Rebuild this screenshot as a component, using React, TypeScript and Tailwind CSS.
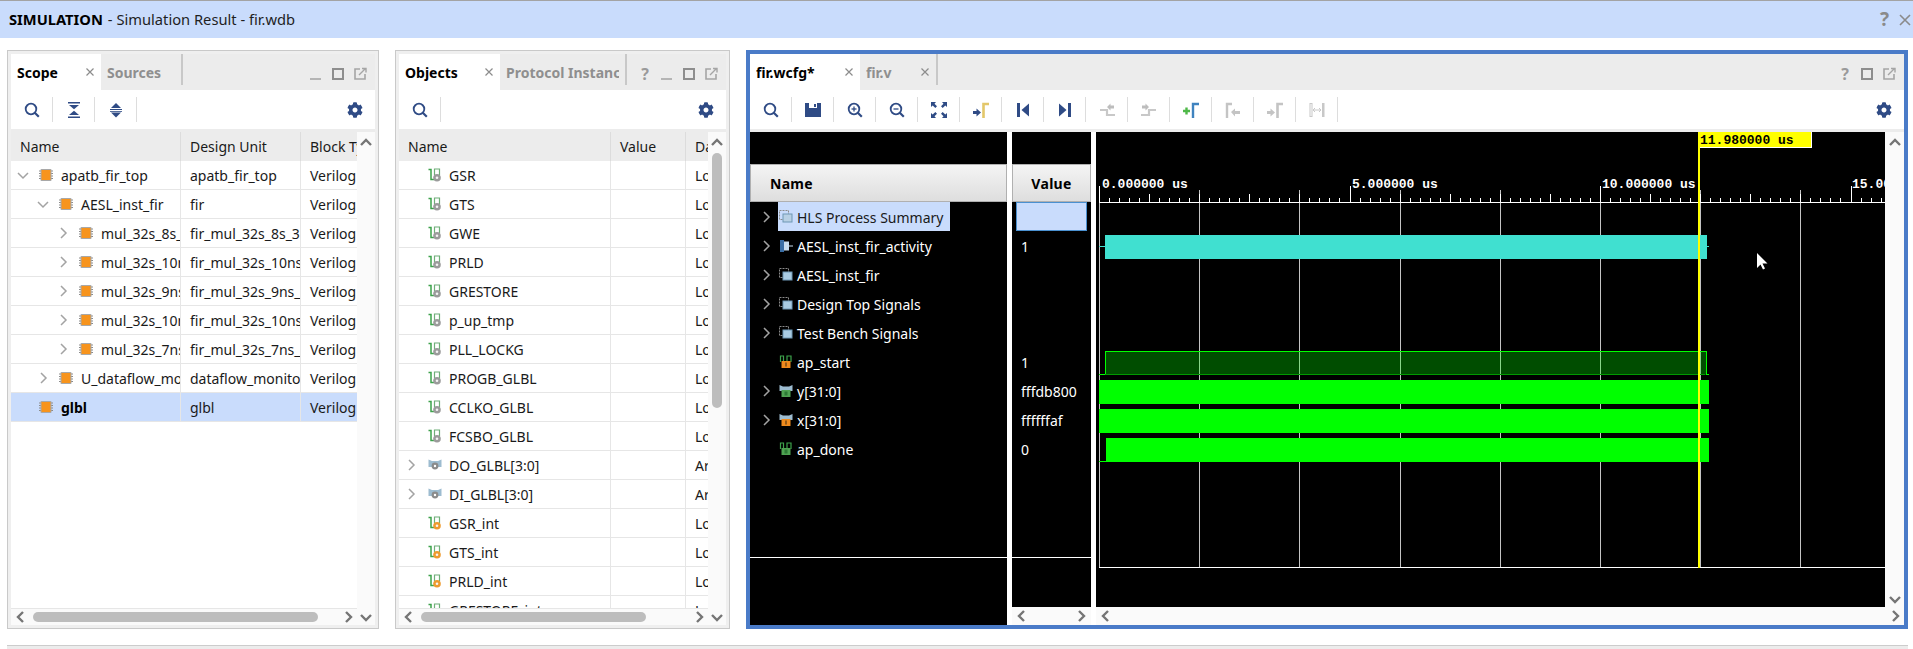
import React from "react";
import { FaCog } from "react-icons/fa";

const NAVY = "#2f4b85";

function Chevron({ dir, tree }: { dir: "up" | "down" | "left" | "right"; tree?: boolean }) {
  const paths = {
    up: "M2 9l5-5 5 5",
    down: "M2 5l5 5 5-5",
    left: "M9 2L4 7l5 5",
    right: "M5 2l5 5-5 5",
  };
  return (
    <svg width="14" height="14" viewBox="0 0 14 14" fill="none">
      <path d={paths[dir]} stroke={tree ? "#a3a3a3" : "#757575"} strokeWidth={tree ? 1.5 : 2.4} />
    </svg>
  );
}

function WindowIcons({ help, noMin }: { help?: boolean; noMin?: boolean }) {
  return (
    <div className="flex items-center gap-[8px] text-[#9a9a9a] pt-[4px]">
      {help && <span className="w-[14px] text-center text-[16px] font-bold leading-none">?</span>}
      {!noMin && (
        <svg width="14" height="14" viewBox="0 0 14 14"><rect x="1" y="11" width="11" height="2" fill="#b5b5b5" /></svg>
      )}
      <svg width="14" height="14" viewBox="0 0 14 14" fill="none"><rect x="2" y="2" width="10" height="10" stroke="#8e8e8e" strokeWidth="2" /></svg>
      <svg width="14" height="14" viewBox="0 0 14 14" fill="none">
        <path d="M7 2H2v10h10V7" stroke="#a5a5a5" strokeWidth="1.6" />
        <path d="M6 8l6-6M9 1.500h4v4" stroke="#a5a5a5" strokeWidth="1.4" />
      </svg>
    </div>
  );
}

function Tab({ label, active, width, closable = true }: { label: string; active?: boolean; width: string; closable?: boolean }) {
  return (
    <div className={`flex items-center pl-[6px] pr-[6px] h-full text-[14px] font-bold ${width} ${active ? "bg-white text-black" : "text-[#8f8f8f]"}`}>
      <span className="flex-1 overflow-hidden whitespace-nowrap">{label}</span>
      {closable && (
        <svg width="10" height="10" viewBox="0 0 10 10" fill="none">
          <path d="M1.500 1.500l7 7M8.500 1.500l-7 7" stroke="#8c8c8c" strokeWidth="1.200" />
        </svg>
      )}
    </div>
  );
}

function TabSep() {
  return <div className="w-[2px] h-[31px] bg-[#c8c8c8] self-start" />;
}

function ToolBtn({ children }: { children: React.ReactNode }) {
  return <div className="w-[42px] h-[25px] flex items-center justify-center border-r border-[#dddddd]">{children}</div>;
}

const SearchIcon = ({ mark }: { mark?: "plus" | "minus" }) => (
  <svg width="16" height="16" viewBox="0 0 16 16" fill="none">
    <circle cx="7" cy="7" r="5.300" stroke={NAVY} strokeWidth="1.800" />
    <path d="M10.800 10.800l4 4" stroke={NAVY} strokeWidth="2.200" />
    {mark && <path d="M4.500 7h5" stroke={NAVY} strokeWidth="1.300" />}
    {mark === "plus" && <path d="M7 4.500v5" stroke={NAVY} strokeWidth="1.300" />}
  </svg>
);

const CollapseIcon = () => (
  <svg width="14" height="16" viewBox="0 0 14 16" fill={NAVY}>
    <rect x="1" y="0" width="12" height="1.500" />
    <path d="M2 3h10L7 7.200z" />
    <path d="M2 13h10L7 8.800z" />
    <rect x="1" y="14.500" width="12" height="1.500" />
  </svg>
);

const ExpandIcon = () => (
  <svg width="14" height="16" viewBox="0 0 14 16" fill={NAVY}>
    <path d="M2 6h10L7 1z" />
    <rect x="1" y="7" width="12" height="1" />
    <rect x="1" y="9" width="12" height="0.800" />
    <path d="M2 10.500h10L7 15.500z" />
  </svg>
);

const SaveIcon = () => (
  <svg width="16" height="16" viewBox="0 0 16 16">
    <path d="M0 1h16v14H0z" fill={NAVY} />
    <rect x="4" y="1" width="8" height="5" fill="#ffffff" />
    <rect x="9" y="2" width="2" height="3" fill={NAVY} />
  </svg>
);

const FitIcon = () => (
  <svg width="16" height="16" viewBox="0 0 16 16" fill={NAVY}>
    <path d="M0 0h5L3.500 1.700 6 4.300 4.300 6 1.700 3.500 0 5z" />
    <path d="M16 0h-5l1.500 1.700L10 4.300 11.700 6l2.600-2.500L16 5z" />
    <path d="M0 16h5l-1.500-1.700L6 11.700 4.300 10l-2.600 2.500L0 11z" />
    <path d="M16 16h-5l1.500-1.700-2.500-2.600 1.700-1.700 2.600 2.500L16 11z" />
  </svg>
);

const MarkerIcon = ({ arrow, bar, left }: { arrow: string; bar: string; left?: boolean }) => (
  <svg width="16" height="16" viewBox="0 0 16 16" fill="none">
    {left ? (
      <>
        <path d="M2 16V2h5" stroke={bar} strokeWidth="2.400" />
        <path d="M6 10l4-3.500V9h5v3h-5v2.500z" fill={arrow} />
      </>
    ) : (
      <>
        <path d="M0 9h3.500V6.500L8 10.500l-4.500 4V12H0z" fill={arrow} />
        <path d="M10.500 16V2H16" stroke={bar} strokeWidth="2.600" />
      </>
    )}
  </svg>
);

const AddMarkerIcon = () => (
  <svg width="16" height="16" viewBox="0 0 16 16" fill="none">
    <path d="M0 9h7M3.500 5.500v7" stroke="#4fb848" strokeWidth="2.400" />
    <path d="M10 16V2h6" stroke="#3f83bf" strokeWidth="2.400" />
  </svg>
);

const PrevIcon = () => (
  <svg width="14" height="16" viewBox="0 0 14 16" fill={NAVY}>
    <rect x="1" y="1" width="3" height="14" />
    <path d="M13 1.500v13L5.500 8z" />
  </svg>
);

const NextIcon = () => (
  <svg width="14" height="16" viewBox="0 0 14 16" fill={NAVY}>
    <rect x="10" y="1" width="3" height="14" />
    <path d="M1 1.500v13L8.500 8z" />
  </svg>
);

const EdgeIcon = ({ flip }: { flip?: boolean }) => (
  <svg width="16" height="14" viewBox="0 0 16 14" fill="none">
    {flip ? (
      <>
        <path d="M0 12h8V7h7" stroke="#c8c8c8" strokeWidth="2.200" />
        <path d="M1 2.500h3.500V0.500L8 4 4.500 7.500v-2H1z" fill="#bdbdbd" />
      </>
    ) : (
      <>
        <path d="M1 7h7v5h8" stroke="#c8c8c8" strokeWidth="2.200" />
        <path d="M15 2.500h-3.500V0.500L8 4l3.500 3.500v-2H15z" fill="#bdbdbd" />
      </>
    )}
  </svg>
);

const SpanIcon = () => (
  <svg width="16" height="14" viewBox="0 0 16 14" fill="none">
    <rect x="1" y="0.500" width="2" height="13" stroke="#c8c8c8" />
    <rect x="13" y="0" width="2.500" height="14" fill="#c8c8c8" />
    <path d="M4 7h8M4 7l2-2M4 7l2 2M12 7l-2-2M12 7l-2 2" stroke="#c8c8c8" />
  </svg>
);

const ChipIcon = () => (
  <svg width="14" height="14" viewBox="0 0 14 14">
    <path d="M0 3h14M0 5.500h14M0 8h14M0 10.500h14" stroke="#8a8a8a" strokeWidth="1" />
    <rect x="1.500" y="1" width="11" height="12" rx="1" fill="#a8a8a8" />
    <rect x="2.500" y="2" width="9" height="10" fill="#f7941d" />
  </svg>
);

const SignalIcon = ({ badge = "#9b9b9b" }: { badge?: string }) => (
  <svg width="14" height="14" viewBox="0 0 14 14" fill="none">
    <path d="M0.500 1.500h2.500v10h3" stroke="#3da24b" strokeWidth="1.500" />
    <path d="M6.500 7V1h5v6" stroke="#6fae78" strokeWidth="1.200" />
    <circle cx="9" cy="9.800" r="3.800" fill={badge} />
    <circle cx="9" cy="9.800" r="1.300" fill="#f4f4f4" />
  </svg>
);

const BusIcon = () => (
  <svg width="14" height="14" viewBox="0 0 14 14">
    <path d="M0.500 1.500L4 3h6l3.500-1.500V9H0.500z" fill="#9dbcd0" />
    <circle cx="7" cy="8" r="3.400" fill="#8b8b8b" />
    <circle cx="7" cy="8" r="1.200" fill="#ffffff" />
  </svg>
);

const GroupIcon = ({ outline }: { outline?: boolean }) => (
  <svg width="14" height="14" viewBox="0 0 14 14" fill="none">
    <rect x="0.500" y="0.500" width="9" height="9" stroke="#8a8a8a" strokeDasharray="2 1" />
    <rect x="4" y="4" width="9" height="8" fill={outline ? "#b8d0e4" : "#a9cbe2"} stroke="#6f97b5" />
  </svg>
);

const ActivityIcon = () => (
  <svg width="14" height="14" viewBox="0 0 14 14">
    <rect x="1" y="1" width="4" height="12" fill="#3a6ea5" />
    <rect x="5" y="2.500" width="5" height="9" fill="#c7dcee" />
    <rect x="10" y="6.500" width="4" height="1" fill="#c7dcee" />
  </svg>
);

const PortIcon = ({ color, mark, bus }: { color: string; mark: string; bus?: boolean }) => (
  <svg width="14" height="14" viewBox="0 0 14 14" fill="none">
    {bus ? (
      <path d="M0.500 1L4 2.500h6L13.500 1v6H0.500z" fill="#9dbcd0" />
    ) : (
      <path d="M1.500 7V1h3v6M8 7V1h4v6" stroke="#3da24b" strokeWidth="1.200" />
    )}
    <rect x="2.500" y="6" width="9" height="7" fill={color} />
    <rect x={mark === "I" ? 6.500 : 5.500} y="7.500" width={mark === "I" ? 1 : 3} height="4" fill={mark === "I" ? "#3a2a10" : "#2d7a35"} />
  </svg>
);

function VScroll({ thumb }: { thumb?: boolean }) {
  return (
    <div className="w-[18px] bg-[#fafafa] flex flex-col items-center">
      <div className="h-[21px] flex items-center justify-center"><Chevron dir="up" /></div>
      {thumb && <div className="w-[10px] h-[255px] rounded-[5px] bg-[#bdbdbd]" />}
      <div className="flex-1" />
      <div className="h-[17px] flex items-center justify-center"><Chevron dir="down" /></div>
    </div>
  );
}

function HScroll({ thumbWidth }: { thumbWidth: string }) {
  return (
    <div className="h-[17px] bg-[#fafafa] border-t border-[#e6e6e6] flex items-center">
      <div className="w-[20px] flex justify-center"><Chevron dir="left" /></div>
      <div className={`ml-[2px] h-[10px] rounded-[5px] bg-[#bdbdbd] ${thumbWidth}`} />
      <div className="flex-1" />
      <div className="w-[18px] flex justify-center"><Chevron dir="right" /></div>
    </div>
  );
}

const indent = ["pl-0", "pl-5", "pl-10"];

const scopeRows = [
  { name: "apatb_fir_top", unit: "apatb_fir_top", level: 0, chev: "down" },
  { name: "AESL_inst_fir", unit: "fir", level: 1, chev: "down" },
  { name: "mul_32s_8s_32_3_1_U1", unit: "fir_mul_32s_8s_32_3_1", level: 2, chev: "right" },
  { name: "mul_32s_10ns_32_3_1_U2", unit: "fir_mul_32s_10ns_32_3_1", level: 2, chev: "right" },
  { name: "mul_32s_9ns_32_3_1_U3", unit: "fir_mul_32s_9ns_32_3_1", level: 2, chev: "right" },
  { name: "mul_32s_10ns_32_3_1_U4", unit: "fir_mul_32s_10ns_32_3_1", level: 2, chev: "right" },
  { name: "mul_32s_7ns_32_3_1_U5", unit: "fir_mul_32s_7ns_32_3_1", level: 2, chev: "right" },
  { name: "U_dataflow_monitor", unit: "dataflow_monitor", level: 1, chev: "right" },
  { name: "glbl", unit: "glbl", level: 0, chev: "", selected: true },
];

const objectRows = [
  { name: "GSR", type: "Logic" },
  { name: "GTS", type: "Logic" },
  { name: "GWE", type: "Logic" },
  { name: "PRLD", type: "Logic" },
  { name: "GRESTORE", type: "Logic" },
  { name: "p_up_tmp", type: "Logic" },
  { name: "PLL_LOCKG", type: "Logic" },
  { name: "PROGB_GLBL", type: "Logic" },
  { name: "CCLKO_GLBL", type: "Logic" },
  { name: "FCSBO_GLBL", type: "Logic" },
  { name: "DO_GLBL[3:0]", type: "Array", bus: true },
  { name: "DI_GLBL[3:0]", type: "Array", bus: true },
  { name: "GSR_int", type: "Logic", reg: true },
  { name: "GTS_int", type: "Logic", reg: true },
  { name: "PRLD_int", type: "Logic", reg: true },
  { name: "GRESTORE_int", type: "Logic", reg: true },
];

const waveRows: { name: string; value: string; chev: boolean; icon: React.ReactNode; selected?: boolean }[] = [
  { name: "HLS Process Summary", value: "", chev: true, icon: <GroupIcon outline />, selected: true },
  { name: "AESL_inst_fir_activity", value: "1", chev: true, icon: <ActivityIcon /> },
  { name: "AESL_inst_fir", value: "", chev: true, icon: <GroupIcon /> },
  { name: "Design Top Signals", value: "", chev: true, icon: <GroupIcon /> },
  { name: "Test Bench Signals", value: "", chev: true, icon: <GroupIcon /> },
  { name: "ap_start", value: "1", chev: false, icon: <PortIcon color="#ee8a1d" mark="I" /> },
  { name: "y[31:0]", value: "fffdb800", chev: true, icon: <PortIcon color="#4fa352" mark="O" bus /> },
  { name: "x[31:0]", value: "ffffffaf", chev: true, icon: <PortIcon color="#ee8a1d" mark="I" bus /> },
  { name: "ap_done", value: "0", chev: false, icon: <PortIcon color="#4fa352" mark="O" /> },
];

function ScopePanel() {
  return (
    <div className="w-[372px] flex flex-col border border-[#c9c9c9] bg-[#efefef] p-[3px]">
      <div className="h-[36px] flex bg-[#ececec]">
        <Tab label="Scope" active width="w-[90px]" />
        <Tab label="Sources" width="w-[80px]" closable={false} />
        <TabSep />
        <div className="flex-1" />
        <div className="self-center pr-[8px]"><WindowIcons /></div>
      </div>
      <div className="h-[39px] bg-white flex items-center">
        <ToolBtn><SearchIcon /></ToolBtn>
        <ToolBtn><CollapseIcon /></ToolBtn>
        <ToolBtn><ExpandIcon /></ToolBtn>
        <div className="ml-auto mr-[12px]"><FaCog size={16} color={NAVY} /></div>
      </div>
      <div className="h-[3px] bg-[#ececec]" />
      <div className="flex-1 flex min-h-0 bg-white">
        <div className="w-[346px] flex flex-col">
          <div className="flex-1 overflow-hidden">
            <div className="h-[29px] flex items-center bg-[#ececec] text-[14px] text-[#1a1a1a]">
              <div className="w-[170px] pl-[9px] h-full flex items-center border-r border-[#dcdcdc]">Name</div>
              <div className="w-[120px] pl-[9px] h-full flex items-center border-r border-[#dcdcdc]">Design Unit</div>
              <div className="w-[56px] pl-[9px] h-full flex items-center overflow-hidden whitespace-nowrap">Block Type</div>
            </div>
            {scopeRows.map((r) => (
              <div key={r.name} className={`h-[29px] flex text-[14px] text-[#1a1a1a] border-b border-[#e6e6e6] ${r.selected ? "bg-[#c9dcfc]" : ""}`}>
                <div className={`w-[170px] flex items-center overflow-hidden whitespace-nowrap border-r border-[#e6e6e6] ${indent[r.level]}`}>
                  <div className="w-6 shrink-0 flex justify-center">
                    {r.chev && <Chevron dir={r.chev as "down" | "right"} tree />}
                  </div>
                  <div className="ml-1 shrink-0 flex"><ChipIcon /></div>
                  <span className={`ml-2 ${r.selected ? "font-bold text-black" : ""}`}>{r.name}</span>
                </div>
                <div className="w-[120px] pl-[9px] flex items-center overflow-hidden whitespace-nowrap border-r border-[#e6e6e6]">{r.unit}</div>
                <div className="w-[56px] pl-[9px] flex items-center overflow-hidden whitespace-nowrap">Verilog Module</div>
              </div>
            ))}
          </div>
          <HScroll thumbWidth="w-[285px]" />
        </div>
        <VScroll />
      </div>
    </div>
  );
}

function ObjectsPanel() {
  return (
    <div className="w-[335px] flex flex-col border border-[#c9c9c9] bg-[#efefef] p-[3px]">
      <div className="h-[36px] flex bg-[#ececec]">
        <Tab label="Objects" active width="w-[101px]" />
        <Tab label="Protocol Instances" width="w-[125px]" closable={false} />
        <TabSep />
        <div className="flex-1" />
        <div className="self-center pr-[8px]"><WindowIcons help /></div>
      </div>
      <div className="h-[39px] bg-white flex items-center">
        <ToolBtn><SearchIcon /></ToolBtn>
        <div className="ml-auto mr-[12px]"><FaCog size={16} color={NAVY} /></div>
      </div>
      <div className="h-[3px] bg-[#ececec]" />
      <div className="flex-1 flex min-h-0 bg-white">
        <div className="w-[309px] flex flex-col">
          <div className="flex-1 overflow-hidden">
            <div className="h-[29px] flex items-center bg-[#ececec] text-[14px] text-[#1a1a1a]">
              <div className="w-[212px] pl-[9px] h-full flex items-center border-r border-[#dcdcdc]">Name</div>
              <div className="w-[75px] pl-[9px] h-full flex items-center border-r border-[#dcdcdc]">Value</div>
              <div className="w-[22px] pl-[9px] h-full flex items-center overflow-hidden whitespace-nowrap">Data Type</div>
            </div>
            {objectRows.map((r) => (
              <div key={r.name} className="h-[29px] flex text-[14px] text-[#1a1a1a] border-b border-[#e6e6e6]">
                <div className="w-[212px] flex items-center overflow-hidden whitespace-nowrap border-r border-[#e6e6e6]">
                  <div className="w-6 shrink-0 flex justify-center">{r.bus && <Chevron dir="right" tree />}</div>
                  <div className="ml-[5px] shrink-0 flex">
                    {r.bus ? <BusIcon /> : <SignalIcon badge={r.reg ? "#ee9a2e" : undefined} />}
                  </div>
                  <span className="ml-[7px]">{r.name}</span>
                </div>
                <div className="w-[75px] border-r border-[#e6e6e6]" />
                <div className="w-[22px] pl-[9px] flex items-center overflow-hidden whitespace-nowrap">{r.type}</div>
              </div>
            ))}
          </div>
          <HScroll thumbWidth="w-[225px]" />
        </div>
        <VScroll thumb />
      </div>
    </div>
  );
}

const ticks = Array.from({ length: 79 }, (_, i) => ({ i, x: Math.round(1099 + i * 10.02) }));

function Waveform() {
  const mono = "font-['Liberation_Mono',monospace] font-bold text-[13px]";
  return (
    <svg width="789" height="475" viewBox="1096 132 789 475" className="block" shapeRendering="crispEdges">
      {ticks.filter((t) => t.i % 10 === 0).map((t) => (
        <rect key={t.i} x={t.x} y={t.i % 50 === 0 ? 186 : 190} width="1" height={t.i % 50 === 0 ? 381 : 377} fill="#c4c4c4" />
      ))}
      {ticks.map((t) => {
        const h = t.i % 25 === 0 ? 16 : t.i % 5 === 0 ? 8 : 4;
        return <rect key={t.i} x={t.x} y={202 - h} width="1" height={h} fill="#ffffff" />;
      })}
      <rect x="1099" y="202" width="786" height="1" fill="#ffffff" />
      <rect x="1099" y="567" width="786" height="1" fill="#ffffff" />

      <text x="1102" y="188" fill="#ffffff" className={mono}>0.000000 us</text>
      <text x="1352" y="188" fill="#ffffff" className={mono}>5.000000 us</text>
      <text x="1602" y="188" fill="#ffffff" className={mono}>10.000000 us</text>
      <text x="1852" y="188" fill="#ffffff" className={mono}>15.000000 us</text>

      <rect x="1099" y="246" width="6" height="1" fill="#40e0d0" />
      <rect x="1105" y="235" width="602" height="24" fill="#40e0d0" />
      <rect x="1707" y="246" width="2" height="1" fill="#40e0d0" />

      <rect x="1105" y="351" width="602" height="24" fill="#00ff00" fillOpacity="0.3" />
      <rect x="1099" y="374" width="6" height="1" fill="#00ff00" />
      <rect x="1105" y="351" width="1" height="24" fill="#00ff00" />
      <rect x="1105" y="351" width="602" height="1" fill="#00ff00" />
      <rect x="1105" y="374" width="600" height="1" fill="#009a00" />
      <rect x="1706" y="351" width="1" height="24" fill="#00ff00" />
      <rect x="1707" y="374" width="2" height="1" fill="#00ff00" />

      <rect x="1099" y="380" width="610" height="24" fill="#00ff00" />
      <rect x="1099" y="409" width="610" height="24" fill="#00ff00" />
      <rect x="1099" y="461" width="7" height="1" fill="#00ff00" />
      <rect x="1106" y="438" width="603" height="24" fill="#00ff00" />

      <rect x="1698" y="132" width="2" height="436" fill="#ffff00" />
      <rect x="1698" y="132" width="113" height="15" fill="#ffff00" />
      <rect x="1811" y="132" width="1" height="16" fill="#ffffff" />
      <rect x="1700" y="147" width="112" height="1" fill="#ffffff" />
      <text x="1700" y="144" fill="#000000" className={mono}>11.980000 us</text>

      <path d="M1757 253v15l3.500-3.500 2.500 5 2-1-2.500-5h5z" fill="#ffffff" shapeRendering="auto" />
    </svg>
  );
}

function WavePanel() {
  return (
    <div className="w-[1162px] flex flex-col border-4 border-[#4a7bc8]">
      <div className="h-[36px] flex bg-[#ececec]">
        <Tab label="fir.wcfg*" active width="w-[110px]" />
        <Tab label="fir.v" width="w-[76px]" />
        <TabSep />
        <div className="flex-1" />
        <div className="self-center pr-[8px]"><WindowIcons help noMin /></div>
      </div>
      <div className="h-[39px] bg-white flex items-center">
        <ToolBtn><SearchIcon /></ToolBtn>
        <ToolBtn><SaveIcon /></ToolBtn>
        <ToolBtn><SearchIcon mark="plus" /></ToolBtn>
        <ToolBtn><SearchIcon mark="minus" /></ToolBtn>
        <ToolBtn><FitIcon /></ToolBtn>
        <ToolBtn><MarkerIcon arrow={NAVY} bar="#e3c76a" /></ToolBtn>
        <ToolBtn><PrevIcon /></ToolBtn>
        <ToolBtn><NextIcon /></ToolBtn>
        <ToolBtn><EdgeIcon /></ToolBtn>
        <ToolBtn><EdgeIcon flip /></ToolBtn>
        <ToolBtn><AddMarkerIcon /></ToolBtn>
        <ToolBtn><MarkerIcon arrow="#c4c4c4" bar="#c4c4c4" left /></ToolBtn>
        <ToolBtn><MarkerIcon arrow="#c4c4c4" bar="#c4c4c4" /></ToolBtn>
        <ToolBtn><SpanIcon /></ToolBtn>
        <div className="ml-auto mr-[12px]"><FaCog size={16} color={NAVY} /></div>
      </div>
      <div className="h-[3px] bg-[#ececec]" />
      <div className="flex-1 flex min-h-0 bg-white text-[14px] text-white">
        <div className="w-[257px] bg-black flex flex-col">
          <div className="h-[32px]" />
          <div className="h-[38px] flex items-center pl-[19px] border border-[#b0b0b0] bg-gradient-to-b from-[#f4f4f4] to-[#dedede] text-black font-bold tracking-[0.3px]">Name</div>
          <div className="flex-1">
            {waveRows.map((r) => (
              <div key={r.name} className="h-[29px] flex items-center">
                <div className="w-[28px] pl-1 pt-px flex justify-center">{r.chev && <Chevron dir="right" tree />}</div>
                <div className={`h-full flex items-center pl-[1px] pr-[7px] pt-px ${r.selected ? "bg-[#c9dcfc] text-[#1a1a1a]" : ""}`}>
                  {r.icon}
                  <span className="ml-[4px] whitespace-nowrap">{r.name}</span>
                </div>
              </div>
            ))}
          </div>
          <div className="h-[68px] border-t border-white" />
        </div>
        <div className="w-[5px]" />
        <div className="w-[79px] flex flex-col">
          <div className="flex-1 bg-black flex flex-col">
            <div className="h-[32px]" />
            <div className="h-[38px] flex items-center justify-center border border-[#b0b0b0] bg-gradient-to-b from-[#f4f4f4] to-[#dedede] text-black font-bold tracking-[0.3px]">Value</div>
            <div className="flex-1">
              {waveRows.map((r) => (
                <div key={r.name} className="h-[29px] flex items-center">
                  {r.selected ? (
                    <div className="mx-[4px] w-full h-full bg-[#c9dcfc] border border-[#4a90d0]" />
                  ) : (
                    <span className="pl-[9px] pt-px whitespace-nowrap">{r.value}</span>
                  )}
                </div>
              ))}
            </div>
            <div className="h-[50px] border-t border-white" />
          </div>
          <div className="h-[18px] bg-[#fafafa] flex items-center justify-between px-[3px]">
            <Chevron dir="left" />
            <Chevron dir="right" />
          </div>
        </div>
        <div className="w-[5px]" />
        <div className="w-[789px] flex flex-col">
          <div className="flex-1 bg-black overflow-hidden"><Waveform /></div>
          <div className="h-[18px] bg-[#fafafa] flex items-center px-[3px]">
            <Chevron dir="left" />
          </div>
        </div>
        <div className="flex-1 flex flex-col bg-[#fafafa] items-center">
          <div className="h-[21px] flex items-center"><Chevron dir="up" /></div>
          <div className="flex-1" />
          <div className="h-[16px] flex items-center"><Chevron dir="down" /></div>
          <div className="h-[18px] flex items-center"><Chevron dir="right" /></div>
        </div>
      </div>
    </div>
  );
}

export default function App() {
  return (
    <div className="w-[1913px] h-[649px] overflow-hidden bg-white flex flex-col font-['Noto_Sans','Open_Sans',sans-serif]">
      <div className="h-[38px] shrink-0 border-t border-[#a3a3a3] bg-[#c9dcfc] flex items-center pl-[9px] pr-[2px] text-[14.7px] text-[#1f1f1f]">
        <span className="font-bold text-black">SIMULATION</span>
        <span className="ml-[5px]">- Simulation Result - fir.wdb</span>
        <span className="ml-auto text-[19px] font-bold text-[#8a8a8a] leading-none">?</span>
        <svg className="ml-[10px]" width="12" height="12" viewBox="0 0 12 12" fill="none">
          <path d="M1 1l10 10M11 1L1 11" stroke="#8a8a8a" strokeWidth="1.600" />
        </svg>
      </div>
      <div className="h-[579px] mt-[12px] shrink-0 flex gap-4 pl-[7px]">
        <ScopePanel />
        <ObjectsPanel />
        <WavePanel />
      </div>
      <div className="mt-[16px] ml-[7px] w-[1901px] flex-1 border-t border-[#cccccc] bg-[#ececec]" />
    </div>
  );
}
